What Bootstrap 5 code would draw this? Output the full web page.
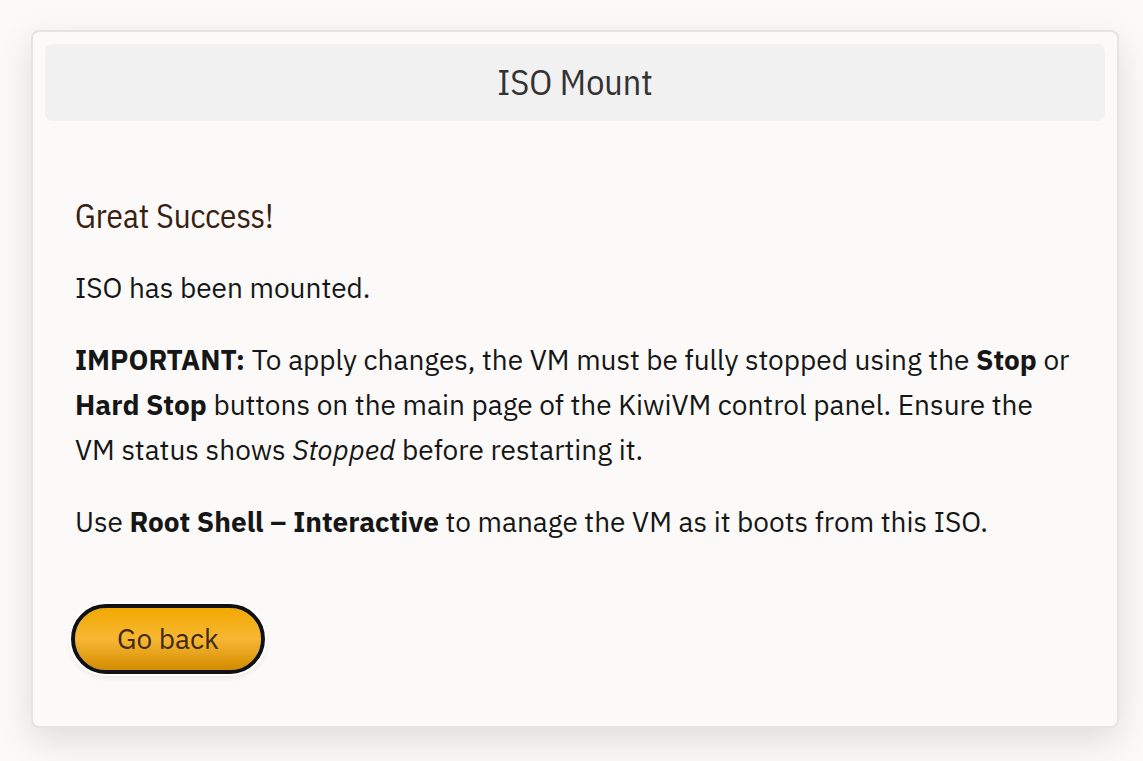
<!DOCTYPE html>
<html lang="en">
<head>
<meta charset="utf-8">
<meta name="viewport" content="width=device-width, initial-scale=1">
<title>ISO Mount</title>
<link href="https://cdn.jsdelivr.net/npm/bootstrap@5.3.0/dist/css/bootstrap.min.css" rel="stylesheet">
<style>
body{background:#fbfaf8;color:#161616;font-family:"IBM Plex Sans","Noto Sans",sans-serif;font-size:28px;line-height:45px}
.panel{margin:30px 24px 33px 31px;padding:12px;background:#fbfaf8;border:2px solid #e5e4e3;border-radius:8px;box-shadow:0 12px 36px rgba(0,0,0,.12)}
.panel-title{background:#f1f1f1;border-radius:8px;font-size:36px;line-height:75px;padding-bottom:2px;color:#333}
.panel-title,.success{font-family:"IBM Plex Sans Condensed","Noto Sans",sans-serif}
.panel-content{padding:72px 30px 44px}
.success{font-size:33px;line-height:45px;color:#3a2010;margin-bottom:27px}
.panel-content p{margin-bottom:27px}
.btn-back{--bs-btn-font-size:28px;--bs-btn-line-height:42px;--bs-btn-padding-x:42px;--bs-btn-padding-y:10px;--bs-btn-border-width:0;--bs-btn-border-radius:31px;--bs-btn-color:#3f2a14;--bs-btn-hover-color:#3f2a14;margin-top:37px;background:linear-gradient(#f2a900,#f7b733 50%,#d48c00);outline:4px solid #111;box-shadow:0 0 0 6px #fff,0 4px 6px 4px rgba(0,0,0,.08)}
</style>
</head>
<body>
<main class="panel">
<h1 class="panel-title text-center fw-normal mb-0">ISO Mount</h1>
<div class="panel-content">
<h2 class="success fw-normal">Great Success!</h2>
<p>ISO has been mounted.</p>
<p>
<strong>IMPORTANT:</strong> To apply changes, the VM must be fully stopped using the <strong>Stop</strong> or
<strong>Hard Stop</strong> buttons on the main page of the KiwiVM control panel. Ensure the
VM status shows <em>Stopped</em> before restarting it.
</p>
<p>Use <strong>Root Shell – Interactive</strong> to manage the VM as it boots from this ISO.</p>
<button type="button" class="btn btn-back">Go back</button>
</div>
</main>
<script src="https://cdn.jsdelivr.net/npm/bootstrap@5.3.0/dist/js/bootstrap.bundle.min.js"></script>
</body>
</html>
